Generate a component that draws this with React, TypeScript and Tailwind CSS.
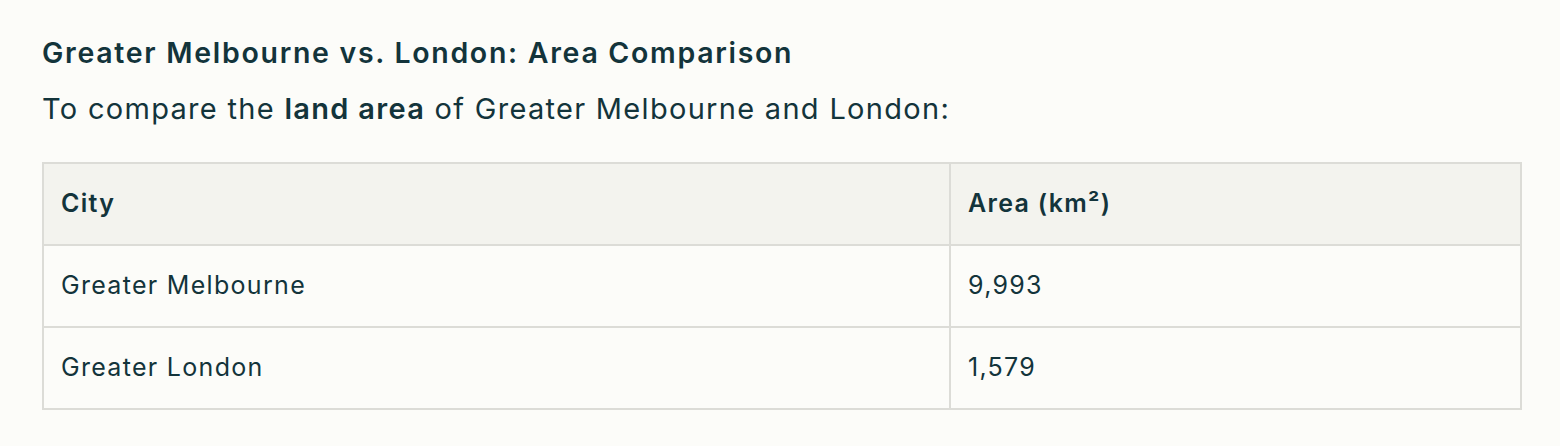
const rows = [
  { city: 'Greater Melbourne', area: '9,993' },
  { city: 'Greater London', area: '1,579' },
];

const App = () => {
  return (
    <div className="min-h-[446px] w-[1560px] bg-[#fcfcf9] px-[42px] pt-[34px] text-[#13343b] font-['Inter',sans-serif]">
      <h2 className="text-[28.5px] leading-[38px] font-semibold tracking-[1.7px]">Greater Melbourne vs. London: Area Comparison</h2>
      <p className="mt-[17px] text-[29px] leading-[40px] tracking-[1.3px]">
        To compare the <strong className="font-semibold">land area</strong> of Greater Melbourne and London:
      </p>
      <table className="mt-[33px] w-[1480px] border-collapse border-2 border-[#dcdcd7] text-[25px] tracking-[1.3px]">
        <thead>
          <tr className="bg-[#f3f3ee] h-[82px]">
            <th className="w-[907px] border-2 border-[#dcdcd7] px-[17px] text-left font-semibold">City</th>
            <th className="border-2 border-[#dcdcd7] px-[17px] text-left font-semibold">Area (km²)</th>
          </tr>
        </thead>
        <tbody>
          {rows.map(r => (
            <tr key={r.city} className="h-[82px]">
              <td className="border-2 border-[#dcdcd7] px-[17px]">{r.city}</td>
              <td className="border-2 border-[#dcdcd7] px-[17px]">{r.area}</td>
            </tr>
          ))}
        </tbody>
      </table>
    </div>
  );
};

export default App;
